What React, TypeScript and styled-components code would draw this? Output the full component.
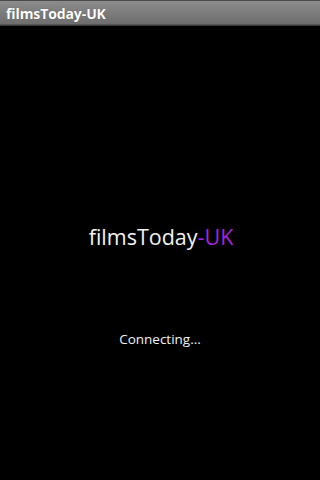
import * as React from 'react'
import styled, {createGlobalStyle} from 'styled-components'

const GlobalStyle = createGlobalStyle`
  html, body {
    margin: 0;
    padding: 0;
    background: #000;
  }
  body {
    font-family: "Open Sans", "DejaVu Sans", sans-serif;
  }
`

const Screen = styled.div`
  width: 320px;
  height: 480px;
  display: flex;
  flex-direction: column;
  background: #000;
  overflow: hidden;
`

const TitleBar = styled.div`
  height: 24px;
  flex: 0 0 auto;
  display: flex;
  align-items: center;
  padding: 0 6px;
  border-top: 1px solid #4a4a4a;
  border-bottom: 1px solid #3a3a3a;
  background: linear-gradient(to bottom, #8c8c8c 0%, #7c7c7c 50%, #6c6c6c 100%);
  box-shadow: inset 0 -1px 0 #555;
`

const Title = styled.span`
  color: #fff;
  font-size: 14px;
  font-weight: 700;
  letter-spacing: -0.1px;
  text-shadow: 0 0 1px rgba(0, 0, 0, 0.4);
`

const Body = styled.div`
  flex: 1;
  display: flex;
  flex-direction: column;
  align-items: center;
`

const Brand = styled.div`
  margin-top: 198px;
  color: #f2f2f2;
  font-size: 21.5px;
  line-height: 26px;
  transform: translateX(1px);
`

const Accent = styled.span`
  color: #a424dc;
`

const Status = styled.div`
  margin-top: 80px;
  color: #f2f2f2;
  font-size: 13.5px;
  line-height: 18px;
`

export default function App() {
  return (
    <Screen>
      <GlobalStyle/>
      <TitleBar>
        <Title>filmsToday-UK</Title>
      </TitleBar>
      <Body>
        <Brand>filmsToday<Accent>-UK</Accent></Brand>
        <Status>Connecting...</Status>
      </Body>
    </Screen>
  )
}
